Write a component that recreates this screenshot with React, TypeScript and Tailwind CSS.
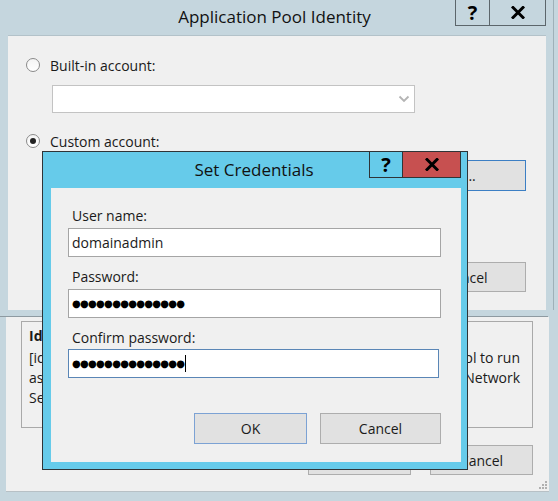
import type { ReactNode } from 'react';

const FONT = "font-['Open_Sans','Noto_Sans',sans-serif]";

function Radio({ checked }: { checked?: boolean }) {
  return (
    <span className="flex h-[14px] w-[14px] items-center justify-center rounded-full border border-[#8a8a8a] bg-gradient-to-b from-[#f4f4f4] to-white">
      {checked && <span className="h-[6px] w-[6px] rounded-full bg-[#222]" />}
    </span>
  );
}

function WinButton({ children, className }: { children?: ReactNode; className: string }) {
  return (
    <div className={`flex items-center justify-center bg-[#e1e1e1] text-[14px] text-[#1a1a1a] ${className}`}>
      {children}
    </div>
  );
}

function Dots({ caret }: { caret?: boolean }) {
  return (
    <div className="flex items-center pl-[3px]">
      <span className="font-['DejaVu_Sans',sans-serif] text-[10px] leading-none tracking-[-0.7px] text-black">
        ●●●●●●●●●●●●●●
      </span>
      {caret && <span className="ml-[1px] h-[17px] w-[1px] bg-black" />}
    </div>
  );
}

function CloseGlyph() {
  return (
    <svg width="14" height="13" viewBox="0 0 14 13">
      <path d="M2 1.5 L12 11.5 M12 1.5 L2 11.5" stroke="#000" strokeWidth="3" strokeLinecap="square" />
    </svg>
  );
}

export default function App() {
  return (
    <div className={`relative flex h-[501px] w-[558px] flex-col overflow-hidden bg-[#c5d6de] ${FONT}`}>
      {/* Application Pool Identity window */}
      <div className="relative flex h-[310px] w-[554px] flex-col border-r border-[#9fb0b8]">
        <div className="flex h-[35px] items-center justify-center pb-[1px] pr-[4px] text-[17px] text-[#111]">
          Application Pool Identity
        </div>
        <div className="absolute left-[455px] top-0 flex h-[26px] border border-t-0 border-[#5c666b]">
          <div className="flex w-[34px] items-center justify-center border-r border-[#5c666b] text-[20px] font-bold leading-none text-black">
            ?
          </div>
          <div className="flex w-[55px] items-center justify-center">
            <CloseGlyph />
          </div>
        </div>

        <div className="ml-[8px] flex h-[275px] w-[538px] flex-col border-t border-[#b3c2c9] bg-[#f0f0f0] text-[14px] text-[#1a1a1a]">
          <div className="mt-[19px] flex h-[20px] items-center gap-[10px] pl-[18px]">
            <Radio />
            <span>Built-in account:</span>
          </div>
          <div className="ml-[44px] mt-[10px] flex h-[28px] w-[363px] items-center justify-end border border-[#c3c3c3] bg-white pr-[4px]">
            <svg width="12" height="8" viewBox="0 0 12 8">
              <path d="M1.5 1.5 L6 6 L10.5 1.5" fill="none" stroke="#b4b4b4" strokeWidth="1.8" />
            </svg>
          </div>
          <div className="mt-[18px] flex h-[20px] items-center gap-[10px] pl-[18px]">
            <Radio checked />
            <span>Custom account:</span>
          </div>
          <div className="flex justify-end pr-[20px]">
            <WinButton className="mt-[9px] h-[31px] w-[120px] border border-[#3c7fc4] pr-[12px]">Set...</WinButton>
          </div>
          <div className="flex justify-end pr-[20px]">
            <WinButton className="mt-[71px] h-[30px] w-[120px] border border-[#adadad]">Cancel</WinButton>
          </div>
        </div>
      </div>

      <div className="mt-[6px] h-[1px] w-[548px] bg-[#8e9aa1]" />

      {/* Advanced Settings window behind */}
      <div className="ml-[6px] flex h-[175px] w-[543px] flex-col border-b border-[#b7c0c5] bg-[#f0f0f0] text-[14px] text-[#1a1a1a]">
        <div className="ml-[15px] mt-[4px] flex h-[107px] w-[512px] flex-col border border-[#a9a9a9] pl-[7px] pr-[12px] pt-[4px]">
          <div className="h-[20px] font-bold leading-[20px]">Identity</div>
          <div className="mt-[2px] flex h-[20px] justify-between leading-[20px]">
            <span className="min-w-0 overflow-hidden whitespace-nowrap">[identityType] Configures the application</span>
            <span className="whitespace-nowrap">pool to run</span>
          </div>
          <div className="flex h-[20px] justify-between leading-[20px]">
            <span className="min-w-0 overflow-hidden whitespace-nowrap">as built-in account, i.e. Application Pool Identity</span>
            <span className="whitespace-nowrap">Network</span>
          </div>
          <div className="h-[20px] overflow-hidden whitespace-nowrap leading-[20px]">
            Service, Local System, Local Service, or as a specific user.
          </div>
        </div>
        <div className="mt-[17px] flex gap-[19px] pl-[302px]">
          <WinButton className="h-[30px] w-[103px] border border-[#adadad]">OK</WinButton>
          <WinButton className="h-[30px] w-[103px] border border-[#adadad]">Cancel</WinButton>
        </div>
        <div className="ml-auto mr-[2px] mt-auto mb-[2px] grid grid-cols-3 gap-[1px]">
          <span />
          <span />
          <span className="h-[2px] w-[2px] bg-[#b0b0b0]" />
          <span />
          <span className="h-[2px] w-[2px] bg-[#b0b0b0]" />
          <span className="h-[2px] w-[2px] bg-[#b0b0b0]" />
          <span className="h-[2px] w-[2px] bg-[#b0b0b0]" />
          <span className="h-[2px] w-[2px] bg-[#b0b0b0]" />
          <span className="h-[2px] w-[2px] bg-[#b0b0b0]" />
        </div>
      </div>

      {/* Set Credentials dialog on top */}
      <div className="absolute left-[42px] top-[151px] flex h-[319px] w-[426px] flex-col border border-[#2f3437] bg-[#66cbea]">
        <div className="relative flex h-[36px] items-center justify-center pr-[2px] text-[17px] text-[#111]">
          Set Credentials
          <div className="absolute left-[326px] top-[-1px] flex h-[27px] border border-[#2f3437]">
            <div className="flex w-[33px] items-center justify-center border-r border-[#2f3437] text-[20px] font-bold leading-none text-black">
              ?
            </div>
            <div className="flex w-[57px] items-center justify-center bg-[#c75050]">
              <CloseGlyph />
            </div>
          </div>
        </div>
        <div className="ml-[8px] flex h-[274px] w-[410px] flex-col bg-[#f0f0f0] pl-[17px] text-[14px] text-[#1a1a1a]">
          <div className="mt-[17px] flex h-[20px] items-center pl-[4px]">User name:</div>
          <div className="mt-[3px] flex h-[29px] w-[373px] items-center border border-[#a5a5a5] bg-white pl-[3px]">
            domainadmin
          </div>
          <div className="mt-[9px] flex h-[20px] items-center pl-[4px]">Password:</div>
          <div className="mt-[3px] flex h-[29px] w-[373px] items-center border border-[#a5a5a5] bg-white">
            <Dots />
          </div>
          <div className="mt-[9px] flex h-[20px] items-center pl-[4px]">Confirm password:</div>
          <div className="mt-[2px] flex h-[29px] w-[371px] items-center border border-[#5a86b6] bg-white">
            <Dots caret />
          </div>
          <div className="mt-[35px] flex gap-[13px] pl-[126px]">
            <WinButton className="h-[31px] w-[113px] border border-[#7ca2d4]">OK</WinButton>
            <WinButton className="h-[31px] w-[121px] border border-[#adadad]">Cancel</WinButton>
          </div>
        </div>
      </div>
    </div>
  );
}
